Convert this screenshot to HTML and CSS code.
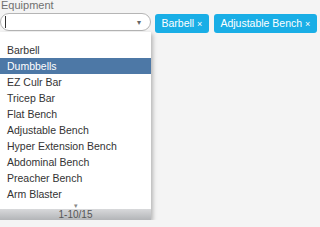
FILE: index.html
```html
<!DOCTYPE html>
<html lang="en">
<head>
  <meta charset="UTF-8" />
  <title>Equipment</title>
  <link rel="stylesheet" href="styles.css">
</head>
<body>

<label class="field-label">Equipment</label>

<div class="picker">
  <div class="select-col">
    <div class="select-box">
      <span class="caret-line"></span>
      <span class="arrow">&#9662;</span>
    </div>
    <div class="dropdown">
      <ul class="options">
        <li>Barbell</li>
        <li class="hover">Dumbbells</li>
        <li>EZ Culr Bar</li>
        <li>Tricep Bar</li>
        <li>Flat Bench</li>
        <li>Adjustable Bench</li>
        <li>Hyper Extension Bench</li>
        <li>Abdominal Bench</li>
        <li>Preacher Bench</li>
        <li>Arm Blaster</li>
      </ul>
      <div class="more">&#9662;</div>
      <div class="pager">1-10/15</div>
    </div>
  </div>

  <div class="tags">
    <span class="tag">Barbell <b>&times;</b></span>
    <span class="tag">Adjustable Bench <b>&times;</b></span>
  </div>
</div>

</body>
</html>
```

FILE: styles.css
```css
body {
  margin: 0;
  background: #f4f4f4;
  font-family: "Liberation Sans", Arial, sans-serif;
  font-size: 10.5px;
  color: #333;
}

.field-label {
  display: block;
  color: #707070;
  font-size: 11px;
  line-height: 11px;
  padding-left: 1px;
}

.picker {
  display: flex;
  align-items: flex-start;
  margin-top: 2px;
}

.select-col {
  width: 151px;
  flex-shrink: 0;
}

.select-box {
  height: 16px;
  border: 1px solid #b5b5b5;
  border-radius: 9px;
  background: #fff;
  display: flex;
  align-items: center;
  justify-content: space-between;
  padding: 0 9px 0 4px;
}

.caret-line {
  width: 1px;
  height: 12px;
  background: #333;
}

.arrow {
  color: #666;
  font-size: 8px;
}

.dropdown {
  margin-top: 1px;
  background: #fff;
  box-shadow: 2px 2px 4px rgba(0,0,0,0.25);
}

.options {
  list-style: none;
  margin: 0;
  padding: 10px 0 0;
}

.options li {
  height: 16px;
  line-height: 16px;
  padding-left: 7px;
  color: #333;
}

.options li.hover {
  background: #4d78a6;
  color: #fff;
}

.more {
  text-align: center;
  color: #888;
  font-size: 7px;
  line-height: 7px;
  height: 7px;
}

.pager {
  height: 11px;
  line-height: 11px;
  text-align: center;
  font-size: 10px;
  color: #555;
  background: linear-gradient(#d8d9db, #b3b5b8);
}

.tags {
  display: flex;
  gap: 5px;
  margin-left: 4px;
  margin-top: 1px;
}

.tag {
  background: #19aee6;
  color: #fff;
  border-radius: 3px;
  height: 19px;
  line-height: 19px;
  padding: 0 6.5px;
  white-space: nowrap;
}

.tag b {
  font-weight: normal;
  font-size: 9px;
}
```
